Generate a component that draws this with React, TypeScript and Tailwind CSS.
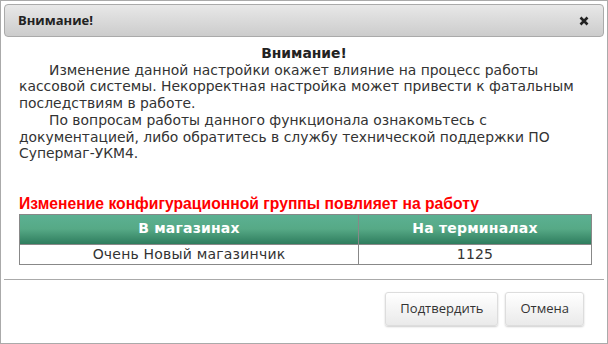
import React from "react";

export default function App() {
  const verdana = { fontFamily: '"DejaVu Sans", Verdana, sans-serif' };
  const tableFont = { fontFamily: '"DejaVu Sans", Verdana, sans-serif', letterSpacing: "0.2px" };
  return (
    <div className="w-[608px] h-[344px] bg-white border border-[#aaaaaa] flex flex-col p-[3px] box-border overflow-hidden">
      <div
        className="h-[33px] shrink-0 rounded-[4px] border border-[#aaaaaa] bg-gradient-to-b from-[#e8e8e8] to-[#cccccc] flex items-center justify-between pl-[13px] pr-[14px]"
      >
        <span className="text-[13px] font-bold text-[#222222]" style={{ fontFamily: '"Open Sans", sans-serif' }}>
          Внимание!
        </span>
        <svg width="10" height="10" viewBox="0 0 10 10">
          <path d="M1.5 1.5 L8.5 8.5 M8.5 1.5 L1.5 8.5" stroke="#222" strokeWidth="2.6" strokeLinecap="butt" />
        </svg>
      </div>
      <div className="flex-1 flex flex-col px-[15px] pt-[8px]">
        <div className="text-[13.9px] leading-[16.7px] text-[#333333]" style={verdana}>
          <div className="text-center font-bold text-[#222222]">Внимание!</div>
          <p className="indent-[30px]">
            Изменение данной настройки окажет влияние на процесс работы кассовой системы. Некорректная настройка может привести к фатальным последствиям в работе.
          </p>
          <p className="indent-[30px]">
            По вопросам работы данного функционала ознакомьтесь с документацией, либо обратитесь в службу технической поддержки ПО Супермаг-УКМ4.
          </p>
        </div>
        <div
          className="mt-[33px] text-[15.7px] leading-[17px] font-bold text-[#ff0000]"
          style={{ fontFamily: '"Liberation Sans", Arial, sans-serif' }}
        >
          Изменение конфигурационной группы повлияет на работу
        </div>
        <table className="mt-[2px] w-[573px] border-collapse border border-[#888888] text-[14px]" style={tableFont}>
          <thead>
            <tr className="h-[30px] bg-gradient-to-b from-[#5cb193] via-[#56a986] to-[#2e7d5e]">
              <th className="border border-[#888888] text-white font-bold w-[339px] pb-[2px]">В магазинах</th>
              <th className="border border-[#888888] text-white font-bold pb-[2px]">На терминалах</th>
            </tr>
          </thead>
          <tbody>
            <tr className="h-[20px]">
              <td className="border border-[#888888] text-center text-[#333333] leading-[18px]">Очень Новый магазинчик</td>
              <td className="border border-[#888888] text-center text-[#333333] leading-[18px]">1125</td>
            </tr>
          </tbody>
        </table>
      </div>
      <div className="h-[1px] bg-[#aaaaaa] shrink-0" />
      <div className="h-[60px] shrink-0 flex justify-end items-start pt-[12px] pr-[20px] gap-[7px]">
        {["Подтвердить", "Отмена"].map((t) => (
          <button
            key={t}
            className="h-[34px] rounded-[3px] border border-[#dddddd] bg-gradient-to-b from-[#ffffff] to-[#eaeaea] shadow-[0_1px_2px_rgba(0,0,0,0.2)] text-[13px] text-[#333333] px-[14px]"
            style={{ fontFamily: '"Open Sans", sans-serif' }}
          >
            {t}
          </button>
        ))}
      </div>
    </div>
  );
}
